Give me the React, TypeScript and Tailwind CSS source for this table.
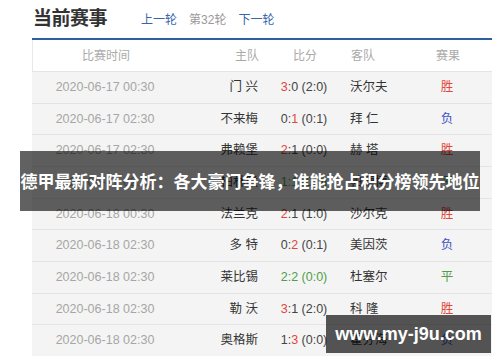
import React from "react";

type Res = "胜" | "负" | "平";
interface Match { time: string; home: string; h: string; a: string; half: string; away: string; res: Res; }

const matches: Match[] = [
  { time: "2020-06-17 00:30", home: "门 兴", h: "3", a: "0", half: "(2:0)", away: "沃尔夫", res: "胜" },
  { time: "2020-06-17 02:30", home: "不来梅", h: "0", a: "1", half: "(0:1)", away: "拜 仁", res: "负" },
  { time: "2020-06-17 02:30", home: "弗赖堡", h: "2", a: "1", half: "(0:0)", away: "赫 塔", res: "胜" },
  { time: "2020-06-17 02:30", home: "柏林联", h: "1", a: "1", half: "(0:0)", away: "帕德博", res: "平" },
  { time: "2020-06-18 00:30", home: "法兰克", h: "2", a: "1", half: "(1:0)", away: "沙尔克", res: "胜" },
  { time: "2020-06-18 02:30", home: "多 特", h: "0", a: "2", half: "(0:1)", away: "美因茨", res: "负" },
  { time: "2020-06-18 02:30", home: "莱比锡", h: "2", a: "2", half: "(0:0)", away: "杜塞尔", res: "平" },
  { time: "2020-06-18 02:30", home: "勒 沃", h: "3", a: "1", half: "(2:0)", away: "科 隆", res: "胜" },
  { time: "2020-06-18 02:30", home: "奥格斯", h: "1", a: "3", half: "(0:0)", away: "霍芬海", res: "负" },
];

const resColor: Record<Res, string> = {
  胜: "text-[#e2483a]",
  负: "text-[#3d52c2]",
  平: "text-[#4e9f45]",
};

const Score = ({ m }: { m: Match }) => {
  const hn = Number(m.h), an = Number(m.a);
  if (hn === an) return <span className="text-[#4e9f45]">{m.h}:{m.a} {m.half}</span>;
  return (
    <span className="text-[#444]">
      <span className={hn > an ? "text-[#e2483a]" : ""}>{m.h}</span>:
      <span className={an > hn ? "text-[#e2483a]" : ""}>{m.a}</span> {m.half}
    </span>
  );
};

const cols = "grid grid-cols-[146px_80px_92px_52px_90px] items-center";

export default function App() {
  return (
    <div className="relative w-[500px] h-[362px] overflow-hidden bg-white font-['Liberation_Sans','Noto_Sans_CJK_SC',sans-serif]">
      <div className="flex items-center h-[38px] pl-[33px]">
        <h1 className="text-[19px] font-bold text-[#333] tracking-[-0.5px]">当前赛事</h1>
        <div className="flex items-center gap-[12px] ml-[34px] mt-[2px] text-[12px]">
          <span className="text-[#3566ad]">上一轮</span>
          <span className="text-[#999]">第32轮</span>
          <span className="text-[#3566ad]">下一轮</span>
        </div>
      </div>

      <div className="ml-[32px] w-[460px] border-t-2 border-[#2f5f9f]">
        <div className={`${cols} h-[31px] bg-white border-l border-[#e8e8e8] text-[12px] text-[#aaa]`}>
          <div className="text-center">比赛时间</div>
          <div className="text-right">主队</div>
          <div className="text-center">比分</div>
          <div>客队</div>
          <div className="text-center">赛果</div>
        </div>
        {matches.map((m, i) => (
          <div key={i} className={`${cols} h-[31.67px] bg-[#f4f4f4] border-t border-[#e4e4e4] text-[12.5px]`}>
            <div className="text-center text-[#a6a6a6]">{m.time}</div>
            <div className="text-right text-[#333] whitespace-pre">{m.home}</div>
            <div className="text-center"><Score m={m} /></div>
            <div className="text-[#333] whitespace-pre">{m.away}</div>
            <div className={`text-center ${resColor[m.res]}`}>{m.res}</div>
          </div>
        ))}
      </div>

      <div className="absolute left-[20px] top-[151px] w-[460px] h-[60px] bg-[rgba(0,0,0,0.62)] flex items-center justify-center">
        <span className="whitespace-nowrap text-white font-bold text-[17px] font-['Noto_Sans_CJK_SC',sans-serif]">
          德甲最新对阵分析：各大豪门争锋，谁能抢占积分榜领先地位
        </span>
      </div>

      <div className="absolute left-[326px] top-[315px] w-[165px] h-[38px] bg-[rgba(0,0,0,0.66)] flex items-center justify-center">
        <span className="text-white font-bold text-[18px] font-['Liberation_Sans',sans-serif]">www.my-j9u.com</span>
      </div>
    </div>
  );
}
